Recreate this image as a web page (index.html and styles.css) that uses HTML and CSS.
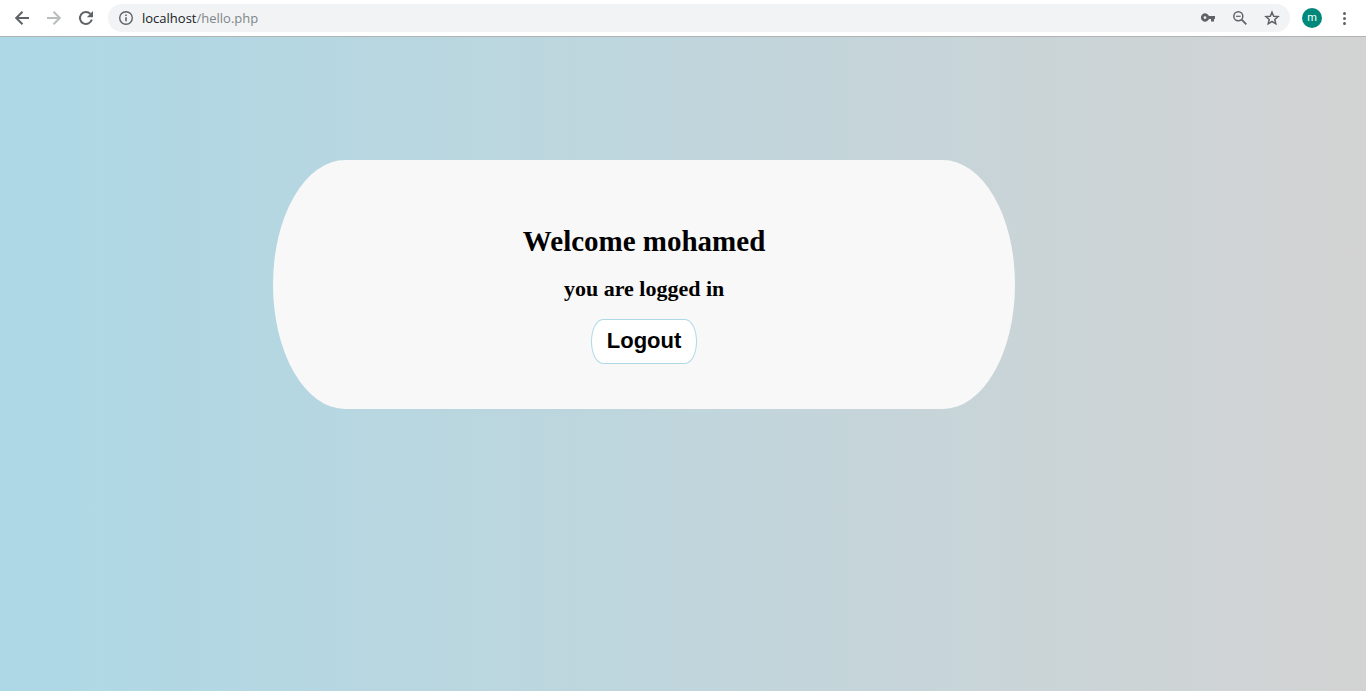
FILE: index.html
```html
<!DOCTYPE html>
<html lang="en">
<head>
<meta charset="utf-8">
<title>hello.php</title>
<link rel="stylesheet" href="styles.css">
</head>
<body>
<header class="toolbar">
  <nav class="nav">
    <button class="icon-btn" type="button" aria-label="Back">
      <svg class="icon" viewBox="0 0 20 20"><path d="M17 10H4.500M10.500 3.700 4.200 10l6.300 6.300" fill="none" stroke="currentColor" stroke-width="2"/></svg>
    </button>
    <button class="icon-btn muted" type="button" aria-label="Forward">
      <svg class="icon" viewBox="0 0 20 20"><path d="M3 10h12.500M9.500 3.700l6.300 6.300-6.300 6.300" fill="none" stroke="currentColor" stroke-width="2"/></svg>
    </button>
    <button class="icon-btn" type="button" aria-label="Reload">
      <svg class="icon" viewBox="0 0 20 20"><path d="M15.800 11.500A6 6 0 1 1 14.400 5.900" fill="none" stroke="currentColor" stroke-width="2"/><path d="M17 3v6.200h-6.200z" fill="currentColor"/></svg>
    </button>
  </nav>
  <div class="address">
    <svg class="icon" viewBox="0 0 20 20"><circle cx="10" cy="10" r="6.300" fill="none" stroke="currentColor" stroke-width="1.400"/><path d="M9.200 9.300h1.600v4H9.200zM9.200 6.400h1.600V8H9.200z" fill="currentColor"/></svg>
    <a class="url" href="#"><span class="host">localhost</span>/hello.php</a>
    <div class="actions">
      <button class="icon-btn" type="button" aria-label="Passwords">
        <svg class="icon" viewBox="0 0 20 20"><path fill="currentColor" fill-rule="evenodd" d="M11 8a4.200 4.200 0 1 0 0 3h2v2.500h3V11h1V8zM7 8.200a1.400 1.400 0 1 1 0 2.800 1.400 1.400 0 0 1 0-2.800z"/></svg>
      </button>
      <button class="icon-btn" type="button" aria-label="Zoom">
        <svg class="icon" viewBox="0 0 20 20"><g fill="none" stroke="currentColor"><circle cx="8.300" cy="8.300" r="4.500" stroke-width="1.500"/><path d="m11.700 11.700 4.600 4.600" stroke-width="1.800"/><path d="M6 8.300h4.600" stroke-width="1.200"/></g></svg>
      </button>
      <button class="icon-btn" type="button" aria-label="Bookmark">
        <svg class="icon" viewBox="0 0 20 20"><path fill="none" stroke="currentColor" stroke-width="1.500" d="m10 4.200 1.700 4 4.400.4-3.300 2.900 1 4.300-3.800-2.300-3.800 2.300 1-4.300-3.300-2.900 4.400-.4z"/></svg>
      </button>
    </div>
  </div>
  <button class="avatar" type="button">m</button>
  <button class="icon-btn" type="button" aria-label="Menu">
    <svg class="icon" viewBox="0 0 20 20"><g fill="currentColor"><circle cx="10.500" cy="5.500" r="1.500"/><circle cx="10.500" cy="10.500" r="1.500"/><circle cx="10.500" cy="15.500" r="1.500"/></g></svg>
  </button>
</header>
<main class="page">
  <section class="card">
    <h1 class="title">Welcome mohamed</h1>
    <h2 class="subtitle">you are logged in</h2>
    <button class="logout" type="button">Logout</button>
  </section>
</main>
</body>
</html>
```
FILE: styles.css
```css
* {
  box-sizing: border-box;
}

body {
  margin: 0;
  min-height: 100vh;
  display: flex;
  flex-direction: column;
  font-family: "Liberation Serif", "Times New Roman", serif;
  color: #000;
}

.toolbar {
  display: flex;
  align-items: center;
  gap: 12px;
  padding: 4px 12px;
  background: #fff;
  border-bottom: 1px solid #b0b2b4;
  color: #5f6368;
}

.nav,
.actions {
  display: flex;
  gap: 12px;
}

.icon-btn {
  display: flex;
  padding: 0;
  border: 0;
  background: none;
  color: inherit;
}

.muted {
  color: #babcbe;
}

.icon {
  display: block;
  width: 20px;
  height: 20px;
}

.address {
  flex: 1;
  display: flex;
  align-items: center;
  gap: 6px;
  height: 28px;
  padding: 0 8px;
  border-radius: 14px;
  background: #f1f3f4;
}

.url {
  flex: 1;
  font: 13px/20px "Open Sans", sans-serif;
  color: #80868b;
  text-decoration: none;
}

.host {
  color: #202124;
}

.avatar {
  width: 20px;
  height: 20px;
  padding: 0;
  border: 0;
  border-radius: 50%;
  background: #00897b;
  color: #fff;
  font: 11px/18px Roboto, sans-serif;
}

.page {
  flex: 1;
  padding: 123px 25.7% 0 20%;
  background: linear-gradient(to right, lightblue, lightgrey);
}

.card {
  display: flex;
  flex-direction: column;
  align-items: center;
  padding: 64px 16px 45px;
  border-radius: 72px / 50%;
  background: #f8f8f8;
}

.title {
  margin: 0 0 16px;
  font-size: 29px;
  line-height: 34px;
}

.subtitle {
  margin: 0 0 15px;
  font-size: 22px;
  line-height: 30px;
}

.logout {
  padding: 8px 15px 9px;
  border: 1px solid lightblue;
  border-radius: 12px / 50%;
  background: #fff;
  color: #000;
  font: bold 22px/26px "Liberation Sans", Arial, sans-serif;
}
```
